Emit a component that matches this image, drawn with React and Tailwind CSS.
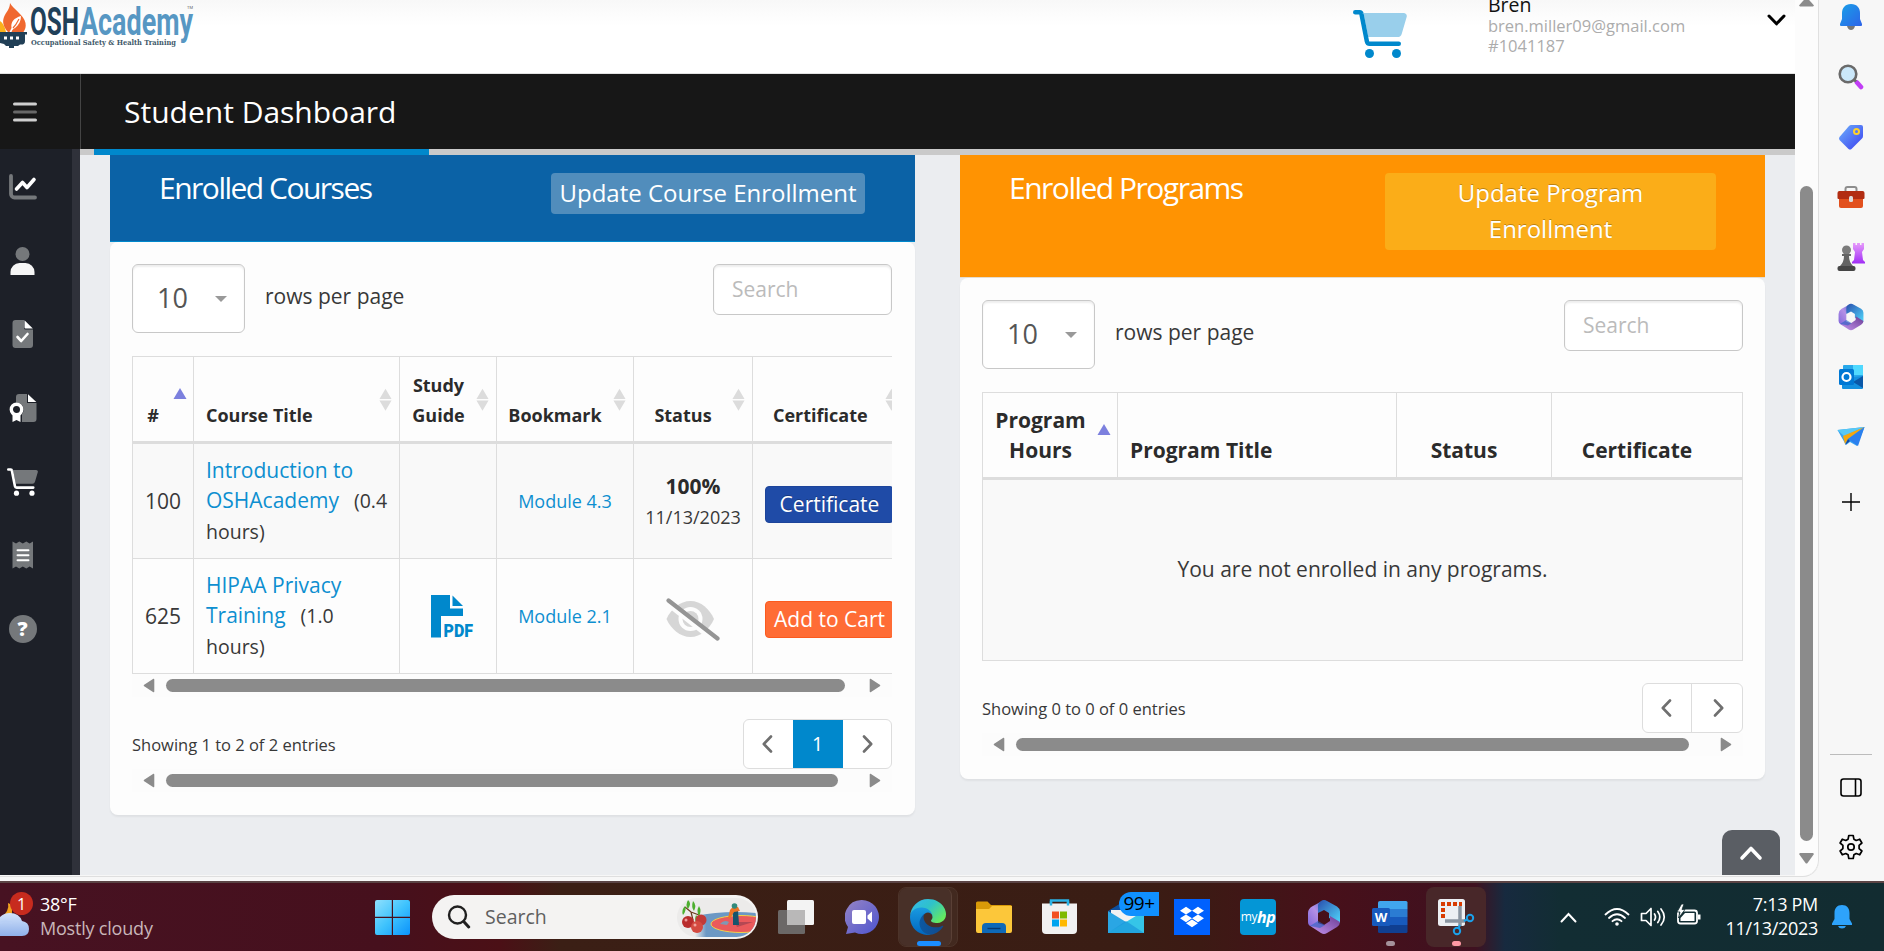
import React from "react";
import { FaDropbox } from "react-icons/fa";

/* ---------- shared bits ---------- */

function Chevron({ dir = "left", className = "" }) {
  const d = {
    left: "M9 1.5 1.8 9 9 16.5",
    right: "M2 1.5 9.2 9 2 16.5",
  }[dir];
  return (
    <svg className={className} width="11" height="18" viewBox="0 0 11 18" fill="none" stroke="#6f6f6f" strokeWidth="2.6" strokeLinecap="round" strokeLinejoin="round">
      <path d={d} />
    </svg>
  );
}

function HScroll({ width, tail }) {
  return (
    <div className="flex h-[23px] items-center bg-[#fcfcfc] pl-[11px]">
      <svg width="12" height="15" viewBox="0 0 12 15">
        <path d="M11.3 1.5v12c0 .7-.7.9-1.3.5L1.2 8.3c-.6-.4-.6-1.1 0-1.5L10 .9c.6-.4 1.300 0 1.300.6z" fill="#8b8b8b" />
      </svg>
      <div className="ml-[11px] h-[13px] rounded-full bg-[#8b8b8b]" style={{ width }} />
      <svg style={{ marginLeft: tail }} width="12" height="15" viewBox="0 0 12 15">
        <path d="M.7 1.500v12c0 .7.7.9 1.300.5l8.800-5.700c.6-.4.6-1.100 0-1.500L2 .9C1.400.5.7.8.7 1.500z" fill="#8b8b8b" />
      </svg>
    </div>
  );
}

function SortBoth() {
  return (
    <svg className="absolute right-[7px] top-[31px]" width="13" height="24" viewBox="0 0 14 24" fill="#dcdcdc">
      <path d="M7 0l6.500 11H.5zM.5 12.500h13L7 23.500z" />
    </svg>
  );
}

function SortUp({ className }) {
  return (
    <svg className={"absolute " + className} width="14" height="12" viewBox="0 0 14 12" fill="#7c80de">
      <path d="M7 0l6.500 11H.5z" />
    </svg>
  );
}

function Toolbar() {
  return (
    <div className="flex h-[69px] items-start">
      <div className="flex h-[69px] w-[113px] items-center rounded-md border border-[#c8c8c8] bg-white pb-px pl-[24px] text-[27px] text-[#555] shadow-[inset_0_2px_2px_rgba(0,0,0,0.07)]">
        10
        <svg className="ml-[27px] mt-0.5" width="12" height="6" viewBox="0 0 12 6">
          <path d="M0 0h12L6 6z" fill="#999" />
        </svg>
      </div>
      <div className="ml-[20px] mt-[16px] text-[21px] leading-[32px] text-[#383838]">rows per page</div>
      <div className="ml-auto flex h-[51px] w-[179px] items-center rounded-md border border-[#c8c8c8] bg-white pl-[18px] pt-px text-[21px] text-[#bbb] shadow-[inset_0_2px_2px_rgba(0,0,0,0.07)]">
        Search
      </div>
    </div>
  );
}

/* ---------- top header ---------- */

function Logo() {
  return (
    <svg className="absolute left-0 top-0 overflow-visible" width="200" height="52" viewBox="0 0 200 52">
      <path d="M0 21c3 2 5 6 6 11H0z" fill="#fbb11b" />
      <path d="M10 3c3 6 14 12 15.500 20 .7 4-.3 6.500-2 9H8C3.500 27 2 22 4 17 6 12 10 9 10 3z" fill="#f0682f" />
      <path d="M21 16c-7 2-10.500 6-9.500 12l-2 4h2c.5-2 1.500-3 3.500-4 4-3 6-7 6-12z" fill="#fff" />
      <path d="M13 28c3-3 4.500-6 6-9" stroke="#f0682f" strokeWidth="1.200" fill="none" />
      <path d="M0 32h27v2.500h-2V41c0 3-2 4-5 3.500L18 46h-4v2H9v-2H6l-2-2-4-1z" fill="#213f56" />
      <path d="M4 36.500h3v3H4zM10 36.500h3v3h-3zM16 36.500h3v3h-3z" fill="#fff" />
      <text x="30" y="35" fontFamily="Roboto, sans-serif" fontWeight="700" fontSize="39" fill="#1f4059" textLength="49" lengthAdjust="spacingAndGlyphs">OSH</text>
      <text x="80" y="35" fontFamily="Roboto, sans-serif" fontWeight="700" fontSize="39" fill="#5797c3" textLength="113" lengthAdjust="spacingAndGlyphs">Academy</text>
      <text x="31" y="45" fontFamily="'DejaVu Serif', serif" fontWeight="700" fontSize="8" fill="#41596a" textLength="145" lengthAdjust="spacingAndGlyphs">Occupational Safety &amp; Health Training</text>
      <text x="187" y="9" fontFamily="Roboto, sans-serif" fontSize="4" fill="#666">TM</text>
    </svg>
  );
}

function CartIcon({ width, height, main, basket }) {
  return (
    <svg width={width} height={height} viewBox="0 0 576 512">
      <path d="M112 32H541c22 0 37 20 32 40L520 252a48 48 0 0 1-46 36H162z" fill={basket} />
      <path d="M24 24h46a20 20 0 0 1 20 17l58 293a32 32 0 0 0 31 26h309" fill="none" stroke={main} strokeWidth="48" strokeLinecap="round" strokeLinejoin="round" />
      <circle cx="176" cy="464" r="48" fill={main} />
      <circle cx="464" cy="464" r="48" fill={main} />
    </svg>
  );
}

function TopHeader() {
  return (
    <header className="relative flex h-[74px] shrink-0 items-start overflow-hidden border-b border-[#e2e2e2] bg-[linear-gradient(#f8f8f8,#ffffff_26px)]">
      <Logo />
      <div className="ml-[1353px] mt-[10px] w-[54px]">
        <CartIcon width={54} height={48} main="#0088cc" basket="#99cfeb" />
      </div>
      <div className="ml-[81px] mt-[-6px] w-[279px] text-[16.5px] leading-[20px] text-[#acacac]">
        <div className="text-[19.5px] leading-[22px] text-[#111]">Bren</div>
        <div>bren.miller09@gmail.com</div>
        <div>#1041187</div>
      </div>
      <svg className="mt-[13px]" width="20" height="14" viewBox="0 0 20 14" fill="none" stroke="#000" strokeWidth="3" strokeLinecap="round" strokeLinejoin="round">
        <path d="M2 3l7.500 7.800L17 3" />
      </svg>
    </header>
  );
}

/* ---------- left sidebar ---------- */

const G = "#75787b";

const sideIcons = [
  <svg width="28" height="26" viewBox="0 0 28 26" fill="none" strokeLinecap="round" strokeLinejoin="round">
    <path d="M2 2v18a3.500 3.500 0 0 0 3.500 3.500H26" stroke={G} strokeWidth="3.800" />
    <path d="M7.500 15l6-6.500 4.500 5 7-8" stroke="#fff" strokeWidth="3.600" />
  </svg>,
  <svg width="26" height="28" viewBox="0 0 26 28">
    <circle cx="12.500" cy="7" r="7" fill={G} />
    <path d="M.5 28v-3a9 9 0 0 1 9-9h6a9 9 0 0 1 9 9v3z" fill="#f5f5f5" />
  </svg>,
  <svg width="22" height="28" viewBox="0 0 22 28">
    <path d="M3.500 0H12v8a1.500 1.500 0 0 0 1.500 1.500H21V25a3 3 0 0 1-3 3H3.500a3 3 0 0 1-3-3V3a3 3 0 0 1 3-3z" fill={G} />
    <path d="M12.500.3V7.500a1 1 0 0 0 1 1h7.300z" fill="#fff" />
    <path d="M5.500 17l3.700 4L15.500 14" stroke="#fff" strokeWidth="2.600" fill="none" strokeLinecap="round" strokeLinejoin="round" />
  </svg>,
  <svg width="28" height="28" viewBox="0 0 28 28">
    <path d="M10 0h8v9h9.500v16a3 3 0 0 1-3 3H13V20c3-3 2.500-11-6-11.500V3a3 3 0 0 1 3-3z" fill={G} />
    <path d="M19 .3V8h8.300z" fill="#fff" />
    <circle cx="7.500" cy="15.500" r="5.200" stroke="#fff" strokeWidth="3.400" fill="#1d2028" />
    <path d="M3.500 20h8v8l-4-2-4 2z" fill="#fff" />
  </svg>,
  <CartIcon width={31} height={28} main="#ffffff" basket={G} />,
  <svg width="22" height="28" viewBox="0 0 22 28">
    <path d="M.5.500l3.500 2 3.300-2 3.500 2 3.500-2 3.300 2 3.400-2v27l-3.400-2-3.300 2-3.500-2-3.500 2-3.300-2-3.500 2z" fill={G} />
    <path d="M5.500 9.300h11M5.500 14.300h11M5.500 19.300h11" stroke="#fff" strokeWidth="1.900" strokeLinecap="round" />
  </svg>,
  <span className="flex h-7 w-7 items-center justify-center rounded-full bg-[#75787b] text-[20px] font-extrabold leading-none text-white">?</span>,
];

function Sidebar() {
  return (
    <nav className="flex w-20 shrink-0 flex-col border-r-8 border-[#2f313a] bg-[#1d2028] pt-px">
      {sideIcons.map((icon, i) => (
        <div key={i} className="flex h-[73.700px] w-[45px] shrink-0 items-center justify-center">
          {icon}
        </div>
      ))}
    </nav>
  );
}

/* ---------- courses card ---------- */

const th = "relative flex items-end justify-center border-l border-[#ddd] pb-[11px] text-center text-[18px] font-bold leading-[30px] text-[#2b2b2b]";
const td = "flex items-center justify-center border-l border-[#ddd]";
const cols = "grid grid-cols-[61px_206px_97px_137px_119px_150px] w-[770px]";

function PdfIcon() {
  return (
    <svg className="ml-[8px]" width="43" height="43" viewBox="0 0 43 43">
      <path d="M0 0h19v13.500h13V21H10v21.500H0z" fill="#0088cc" />
      <path d="M21.500.5V11H32z" fill="#0088cc" />
      <text x="12.500" y="42" fontFamily="Roboto, sans-serif" fontWeight="900" fontSize="18.500" fill="#0088cc" textLength="29.500" lengthAdjust="spacingAndGlyphs">PDF</text>
    </svg>
  );
}

function EyeSlash() {
  return (
    <svg className="mt-[6px]" width="54" height="44" viewBox="0 0 54 44" fill="none">
      <path d="M.5 22C5 12 14 4 24.500 4S43.500 12 48 22C43.500 32 35 40 24.500 40S5 32 .500 22z" fill="#d6d6d6" />
      <circle cx="24.500" cy="22" r="12" fill="#fdfdfd" />
      <circle cx="24.500" cy="22" r="8" fill="#d6d6d6" />
      <path d="M20 14l4 5-6 2z" fill="#fdfdfd" />
      <path d="M-1 5L47 43" stroke="#fdfdfd" strokeWidth="4.500" />
      <path d="M2.500 3.500l49 38" stroke="#959595" strokeWidth="4.200" strokeLinecap="round" />
    </svg>
  );
}

function CoursesCard() {
  return (
    <section className="flex w-[805px] flex-col">
      <div className="flex h-[87px] items-start justify-between border-b border-[#0088cc] bg-[#0b62a6] pl-[49px] pr-[50px] pt-[18px] text-white">
        <h2 className="-mt-[3px] text-[30px] leading-[36px] tracking-[-1.500px]">Enrolled Courses</h2>
        <button className="h-[41px] w-[314px] rounded bg-[#518dbc] pb-0.5 text-center text-[24px] leading-[38px]">Update Course Enrollment</button>
      </div>
      <div className="bg-[#ebedf0]">
        <div className="rounded-lg bg-[#fdfdfd] px-[22px] pb-[23px] pr-[23px] pt-[22px] shadow-[0_2px_2px_rgba(0,0,0,0.05)]">
          <Toolbar />
          <div className="mt-[23px] overflow-hidden">
            <div className={cols + " h-[88px] border-b-[3px] border-t border-b-[#ddd] border-t-[#ddd]"}>
              <div className={th + " pr-[20px]"}>#<SortUp className="right-[6px] top-[31px]" /></div>
              <div className={th + " !justify-start pl-3"}>Course Title<SortBoth /></div>
              <div className={th + " pr-[19px]"}>Study<br />Guide<SortBoth /></div>
              <div className={th + " pr-[20px]"}>Bookmark<SortBoth /></div>
              <div className={th + " pr-[20px]"}>Status<SortBoth /></div>
              <div className={th + " !justify-start pl-[20px]"}>Certificate
                <svg className="absolute left-[132px] top-[31px]" width="13" height="24" viewBox="0 0 14 24" fill="#dcdcdc"><path d="M7 0l6.500 11H.5zM.5 12.500h13L7 23.500z" /></svg>
              </div>
            </div>
            <div className={cols + " h-[115px] border-b border-[#ddd] bg-[#f9f9f9] text-[21px] leading-[30px] text-[#383838]"}>
              <div className={td}>100</div>
              <div className={td + " !justify-start pl-[12px]"}>
                <div>
                  <span className="text-[#0d8fd0]">Introduction to<br />OSHAcademy</span>
                  <span className="ml-[15px] text-[19.500px]">(0.4<br />hours)</span>
                </div>
              </div>
              <div className={td} />
              <div className={td + " text-[18px] text-[#0d8fd0]"}>Module 4.3</div>
              <div className={td + " flex-col gap-px"}>
                <b className="text-[#2b2b2b]">100%</b>
                <span className="text-[18px]">11/13/2023</span>
              </div>
              <div className={td + " !justify-start pl-3"}>
                <button className="mt-[7px] h-[37px] w-[129px] rounded border border-[#1d449a] bg-[#1f4ba7] pb-px text-center leading-[34px] text-white [text-shadow:0_-1px_0_rgba(0,0,0,0.25)]">Certificate</button>
              </div>
            </div>
            <div className={cols + " h-[115px] border-b border-[#ddd] text-[21px] leading-[30px] text-[#383838]"}>
              <div className={td}>625</div>
              <div className={td + " !justify-start pl-[12px]"}>
                <div>
                  <span className="text-[#0d8fd0]">HIPAA Privacy<br />Training</span>
                  <span className="ml-[15px] text-[19.500px]">(1.0<br />hours)</span>
                </div>
              </div>
              <div className={td}><PdfIcon /></div>
              <div className={td + " text-[18px] text-[#0d8fd0]"}>Module 2.1</div>
              <div className={td}><EyeSlash /></div>
              <div className={td + " !justify-start pl-3"}>
                <button className="mt-[7px] h-[37px] w-[129px] rounded border border-[#fb5a1e] bg-[#ff6c35] pb-px text-center leading-[34px] text-white">Add to Cart</button>
              </div>
            </div>
            <HScroll width={679} tail={24} />
          </div>
          <div className="mt-[22px] flex h-[50px] items-center justify-between">
            <div className="pt-[3px] text-[16.500px] text-[#383838]">Showing 1 to 2 of 2 entries</div>
            <div className="flex h-[50px] w-[149px] overflow-hidden rounded-md border border-[#ddd] bg-white">
              <div className="flex flex-1 items-center justify-center pr-0.5"><Chevron /></div>
              <div className="-my-px flex w-[50px] items-center justify-center bg-[#0088cc] text-[19.500px] text-white">1</div>
              <div className="flex flex-1 items-center justify-center pl-0.5"><Chevron dir="right" /></div>
            </div>
          </div>
          <HScroll width={672} tail={31} />
        </div>
      </div>
    </section>
  );
}

/* ---------- programs card ---------- */

function ProgramsCard() {
  const cell = "relative flex items-end border-l border-[#ddd] pb-[12px] text-[21px] font-bold leading-[30px] text-[#2b2b2b]";
  return (
    <section className="ml-[45px] flex w-[805px] flex-col">
      <div className="flex h-[123px] items-start justify-between border-b border-[#e4dccf] bg-[#ff9302] pl-[49px] pr-[49px] pt-[18px] text-white">
        <h2 className="-mt-[3px] text-[30px] leading-[36px] tracking-[-1.500px]">Enrolled Programs</h2>
        <button className="h-[77px] w-[331px] rounded bg-[#fbad18] pb-px text-center text-[24px] leading-[36px] [text-shadow:0_-1px_0_rgba(0,0,0,0.25)]">Update Program<br />Enrollment</button>
      </div>
      <div className="rounded-lg bg-[#fdfdfd] px-[22px] pb-[23px] pt-[22px] shadow-[0_2px_2px_rgba(0,0,0,0.05)]">
        <Toolbar />
        <div className="mt-[23px] border-r border-[#ddd]">
          <div className="grid h-[88px] grid-cols-[135px_279px_155px_1fr] border-b-[3px] border-t border-[#ddd]">
            <div className={cell + " justify-center pr-[19px] text-center"}>Program<br />Hours<SortUp className="right-[6px] top-[31px]" /></div>
            <div className={cell + " pl-[12px]"}>Program Title</div>
            <div className={cell + " justify-center pr-[20px]"}>Status</div>
            <div className={cell + " justify-center pr-[20px]"}>Certificate</div>
          </div>
          <div className="flex h-[181px] items-center justify-center border-b border-l border-[#ddd] bg-[#f9f9f9] text-[21px] text-[#383838]">You are not enrolled in any programs.</div>
        </div>
        <div className="mt-[22px] flex h-[50px] items-center justify-between">
          <div className="pt-[3px] text-[16.500px] text-[#383838]">Showing 0 to 0 of 0 entries</div>
          <div className="flex h-[50px] w-[101px] overflow-hidden rounded-md border border-[#ddd] bg-white">
            <div className="flex w-[49px] items-center justify-center border-r border-[#ddd] pr-0.5"><Chevron /></div>
            <div className="flex flex-1 items-center justify-center pl-0.5"><Chevron dir="right" /></div>
          </div>
        </div>
        <HScroll width={673} tail={31} />
      </div>
    </section>
  );
}

/* ---------- right browser rail ---------- */

function M365({ size, id }) {
  return (
    <svg width={size} height={size} viewBox="0 0 36 36">
      <defs>
        <linearGradient id={id + "a"} x1="0" y1="1" x2="1" y2="0"><stop offset="0" stopColor="#7a62d8" /><stop offset=".5" stopColor="#b590e6" /><stop offset="1" stopColor="#2f5fc4" /></linearGradient>
        <linearGradient id={id + "b"} x1="0" y1="0" x2="1" y2="1"><stop offset="0" stopColor="#2a4fae" /><stop offset="1" stopColor="#50d6fb" /></linearGradient>
        <linearGradient id={id + "c"} x1="0" y1="1" x2="1" y2="0"><stop offset="0" stopColor="#c695ee" /><stop offset="1" stopColor="#6a3c94" /></linearGradient>
      </defs>
      <path d="M18 1 6 7.500Q2 10 2 14v9q0 3 3 4.500l6 2.500q1-1 1-4V13l11-9z" fill={"url(#" + id + "a)"} />
      <path d="M15 2q3-2 6 0l10 5.500q3 2 3 5V24l-11-5v-5l-5-3-6 3V6q0-2 3-4z" fill={"url(#" + id + "b)"} />
      <path d="M24 17l10 6q0 3-3 5l-10 6q-3 2-6 0L5 27.500 12 24l6 2 6-4z" fill={"url(#" + id + "c)"} />
      <path d="M12 22L4 27l10 2 5-3z" fill="#2a62c8" opacity=".6" />
    </svg>
  );
}

const railIcons = [
  <svg width="24" height="28" viewBox="0 0 24 28">
    <defs><linearGradient id="bell" x1="0" y1="0" x2="1" y2="1"><stop offset="0" stopColor="#18a0e8" /><stop offset="1" stopColor="#2e63e8" /></linearGradient></defs>
    <path d="M8 23h8q-1 4-4 4t-4-4z" fill="#777" />
    <path d="M12 1C6 1 3 5 3 10v6l-2 5q-.5 2 1 2h20q1.500 0 1-2l-2-5v-6c0-5-3-9-9-9z" fill="url(#bell)" />
  </svg>,
  <svg width="26" height="26" viewBox="0 0 26 26">
    <path d="M19 18.500l4 4.500" stroke="#c13df5" strokeWidth="4.600" strokeLinecap="round" />
    <path d="M16 15.500l2 2" stroke="#6a6a6a" strokeWidth="3" />
    <circle cx="10" cy="10" r="8.300" fill="#cbe8fa" stroke="#6a6a6a" strokeWidth="2.600" />
  </svg>,
  <svg width="26" height="26" viewBox="0 0 26 26">
    <defs><linearGradient id="tag" x1="0" y1="0" x2="1" y2="1"><stop offset="0" stopColor="#6db0fb" /><stop offset="1" stopColor="#3b3ff0" /></linearGradient></defs>
    <path d="M13 1h10q2 0 2 2v9q0 1.500-1 2.500L13.500 25q-1.500 1-3 0L1.500 16q-1-1.500 0-3L11 2q1-1 2-1z" fill="url(#tag)" />
    <circle cx="18.500" cy="7.500" r="2.500" fill="none" stroke="#ffd12b" strokeWidth="2" />
  </svg>,
  <svg width="28" height="24" viewBox="0 0 28 24">
    <path d="M8.500 7V4q0-2 2-2h7q2 0 2 2v3" fill="none" stroke="#8d8d8d" strokeWidth="2" />
    <rect x="2" y="6" width="24" height="17" rx="2" fill="#e2501d" />
    <path d="M.500 8q0-2 2-2h23q2 0 2 2v5q0 1-1 1h-25q-1 0-1-1z" fill="#b22d12" />
    <rect x="12" y="11" width="4" height="6" rx="1.500" fill="#ddd" />
  </svg>,
  <svg width="30" height="30" viewBox="0 0 30 30">
    <defs><linearGradient id="rook" x1="0" y1="0" x2="0" y2="1"><stop offset="0" stopColor="#e79bfb" /><stop offset="1" stopColor="#a02df5" /></linearGradient></defs>
    <path d="M17 1h2.500v2H21V1h3v2h1.500V1H28v6l-2 3 1 8 2 2v1.500H16V20l2-2 1-8-2-3z" fill="url(#rook)" />
    <circle cx="10.500" cy="8" r="4.500" fill="#7b7b7b" />
    <path d="M6 12h9v2h-2q0 6 4 10H4q4-4 4-10H6z" fill="#636363" />
    <rect x="1.500" y="24" width="18" height="5" rx="2" fill="#454545" />
  </svg>,
  <M365 size={28} id="rail" />,
  <svg width="26" height="26" viewBox="0 0 26 26">
    <path d="M6 1h18q1 0 1 1v12H5V2q0-1 1-1z" fill="#28a8ea" />
    <path d="M15 1h9q1 0 1 1v9H15z" fill="#50d9ff" />
    <path d="M4 13h11l10-1v12q0 1-1 1H5q-1 0-1-1z" fill="#1490df" />
    <path d="M15 18l10-6v12z" fill="#0a58a8" />
    <rect x="1" y="5" width="15" height="16" rx="1.500" fill="#0078d4" />
    <circle cx="8.500" cy="13" r="4" fill="none" stroke="#fff" strokeWidth="2.200" />
  </svg>,
  <svg width="28" height="22" viewBox="0 0 28 22">
    <path d="M.5 4L27.500 1 20 20l-7-4-4 3z" fill="#36a3f2" />
    <path d="M.5 4L27.500 1 7 10z" fill="#58c8f4" />
    <path d="M27.500 1L6 10l2 8 3-5z" fill="#f5a70d" />
    <path d="M27.500 1L11 13l10 7z" fill="#2b80ee" />
    <path d="M11 13l-3 6 5-4z" fill="#17479e" />
  </svg>,
];

function Rail() {
  return (
    <aside className="flex h-full w-[65px] shrink-0 flex-col items-center bg-[#f7f7f7] pr-0.5">
      <div className="-mt-[13px] flex flex-col">
        {railIcons.map((icon, i) => (
          <div key={i} className="flex h-[60px] w-[63px] items-center justify-center">{icon}</div>
        ))}
        <div className="flex h-[70px] items-center justify-center">
          <svg width="20" height="20" viewBox="0 0 20 20" stroke="#000" strokeWidth="1.400"><path d="M10 1v18M1 10h18" /></svg>
        </div>
      </div>
      <div className="mt-[217px] h-px w-[42px] bg-[#bcbcbc]" />
      <svg className="mt-[23px] shrink-0" width="22" height="19" viewBox="0 0 22 19" fill="none" stroke="#000" strokeWidth="1.600">
        <rect x="1" y="1" width="20" height="17" rx="2.500" /><path d="M15.500 1v17" />
      </svg>
      <svg className="mt-[37px] shrink-0" width="26" height="27" viewBox="0 0 26 27" fill="none" stroke="#000" strokeWidth="1.700" strokeLinejoin="round">
        <path d="M10.800 1.500h4.400l.7 3.700 2.300 1.300 3.500-1.300 2.200 3.800-2.800 2.400v3.200l2.800 2.400-2.200 3.800-3.500-1.300-2.300 1.300-.7 3.700h-4.400l-.7-3.700-2.300-1.300-3.500 1.300L2.100 17l2.800-2.400v-3.200L2.100 9l2.200-3.800 3.500 1.300 2.300-1.300z" />
        <circle cx="13" cy="13" r="3.200" />
      </svg>
    </aside>
  );
}

function PageScrollbar() {
  return (
    <div className="flex w-6 shrink-0 flex-col items-center rounded-br-2xl border-r border-[#e0e0e0] bg-[#fcfcfc]">
      <svg width="15" height="10" viewBox="0 0 15 10" className="-mt-[3px] shrink-0"><path d="M7.500 0L15 8.500 14 9.500H1L0 8.500z" fill="#8b8b8b" /></svg>
      <div className="mt-[179px] h-[655px] w-[13px] shrink-0 rounded-full bg-[#8b8b8b]" />
      <svg width="15" height="11" viewBox="0 0 15 11" className="mt-[12px] shrink-0"><path d="M1 0h13l1 1-6.500 9q-1 1-2 0L0 1z" fill="#8b8b8b" /></svg>
    </div>
  );
}

/* ---------- taskbar ---------- */

const ui = "font-['Open_Sans','Noto_Sans',sans-serif]";

function Cell({ children }) {
  return <div className="flex h-[60px] w-[66px] shrink-0 items-center justify-center">{children}</div>;
}

function SearchArt() {
  return (
    <svg className="absolute right-[1px] top-[3px]" width="80" height="39" viewBox="0 0 80 39">
      <defs>
        <clipPath id="pill"><rect x="0" y="0" width="79" height="39" rx="19.500" /></clipPath>
        <linearGradient id="water" x1="0" y1="0" x2="1" y2="0"><stop offset="0" stopColor="#6c98c4" stopOpacity="0" /><stop offset=".18" stopColor="#6c98c4" /></linearGradient>
      </defs>
      <g clipPath="url(#pill)">
        <rect width="80" height="39" fill="#ecebea" />
        <path d="M18 18q30-6 62-3v24H18z" fill="url(#water)" />
        <ellipse cx="64" cy="26" rx="30" ry="8.500" fill="#ea5a5c" stroke="#f2cf4a" strokeWidth="1" />
        <path d="M58 24h18l-16 5z" fill="#8f3c4c" opacity=".6" />
        <path d="M43 26q4-5 9-2l-2 3z" fill="#8198b4" />
        <path d="M8 9l6 5 8 3M14 14l2 8" stroke="#6d3c1f" strokeWidth="1.200" fill="none" />
        <path d="M11 2q4 3 0 9-3-4 0-9zM16 3q4 4 1 10-3-4-1-10zM22 8q3 5 0 10-3-5 0-10zM8 8q2 4-2 9-2-5 2-9zM19 17q4 4 1 10-3-5-1-10z" fill="#4caf2e" />
        <circle cx="11" cy="24" r="6" fill="#b92c2c" /><circle cx="24" cy="22" r="5.500" fill="#c23a37" /><circle cx="20" cy="29" r="6" fill="#d44a40" />
        <circle cx="9" cy="22" r="1.500" fill="#e99" /><circle cx="18" cy="27" r="1.500" fill="#f0a39b" />
        <path d="M56 12h5l1 15h-6z" fill="#17546c" />
        <path d="M53 12q3-4 8-3l2 4-6 1-4 7-2-1z" fill="#ee7426" />
        <circle cx="57.500" cy="8" r="2.800" fill="#318a7b" />
      </g>
    </svg>
  );
}

function Taskbar() {
  return (
    <footer className={ui + " flex h-[70px] shrink-0 items-center overflow-hidden border-t-2 border-[#5b4445] bg-[linear-gradient(90deg,#471222_0px,#46101d_380px,#4b1016_500px,#3b1f15_560px,#3a1d14_1130px,#3c1a14_1200px,#47101a_1330px,#3f1120_1475px,#172a3f_1505px,#122d33_1560px,#122c31_1884px)] text-white"}>
      <div className="relative h-[60px] w-[40px] shrink-0">
        <svg className="absolute left-0 top-[14px]" width="32" height="38" viewBox="0 0 32 38">
          <defs><linearGradient id="cloud" x1="0" y1="0" x2="0" y2="1"><stop offset="0" stopColor="#d4e4fb" /><stop offset="1" stopColor="#8fb0ea" /></linearGradient></defs>
          <path d="M8 2q2 8-8 16v12h12V4z" fill="#f2a31f" />
          <path d="M0 16q4-4 10-4 9 0 12 8 7 1 7 8 0 7-7 7H0z" fill="url(#cloud)" />
          <path d="M0 22q6-3 12 0" stroke="#b8cff5" fill="none" strokeWidth="2" />
        </svg>
        <div className="absolute left-[10px] top-[5px] flex h-[23px] w-[23px] items-center justify-center rounded-full bg-[#c72b1e] text-[16px] leading-none">1</div>
      </div>
      <div className="w-[335px] pb-0.5 text-[18px] leading-[24px] tracking-[-0.3px]">
        <div>38°F</div>
        <div className="text-[#c9b6ba] tracking-[-0.2px]">Mostly cloudy</div>
      </div>
      <svg className="shrink-0" width="35" height="35" viewBox="0 0 35 35">
        <defs><linearGradient id="win" x1="0" y1="0" x2="1" y2="1"><stop offset="0" stopColor="#8fe0fd" /><stop offset=".5" stopColor="#3fc3fd" /><stop offset="1" stopColor="#0a92fb" /></linearGradient></defs>
        <path d="M2 0h14.800v16.800H0V2q0-2 2-2zM18 0h15q2 0 2 2v14.800H18zM0 18h16.800v17H2q-2 0-2-2zM18 18h17v15q0 2-2 2H18z" fill="url(#win)" />
      </svg>
      <div className="relative ml-[22px] mr-[5px] flex h-[44px] w-[326px] shrink-0 items-center rounded-full bg-[#f4f3f2] pl-[15px]">
        <svg width="24" height="24" viewBox="0 0 24 24" fill="none" stroke="#202020" strokeWidth="2.400" strokeLinecap="round"><circle cx="10.500" cy="10" r="8.500" /><path d="M16.700 16.500l5 5.500" strokeWidth="3" /></svg>
        <span className="ml-[14px] text-[19.500px] text-[#5f5f5f]">Search</span>
        <SearchArt />
      </div>
      <Cell>
        <svg width="36" height="34" viewBox="0 0 36 34">
          <rect x="9" y="0" width="27" height="25" rx="1.500" fill="#f3f3f3" />
          <rect x="0" y="10" width="27" height="24" rx="1.500" fill="#6b6867" />
          <path d="M9 10h18v15H9z" fill="#b9b8b8" />
        </svg>
      </Cell>
      <Cell>
        <svg width="34" height="35" viewBox="0 0 34 35">
          <defs><linearGradient id="chat" x1="0" y1="0" x2="1" y2="1"><stop offset="0" stopColor="#9684c4" /><stop offset="1" stopColor="#4d55d0" /></linearGradient></defs>
          <path d="M17 0a17 17 0 1 1-7 32.500L1 34l2-7A17 17 0 0 1 17 0z" fill="url(#chat)" />
          <rect x="7" y="10" width="14" height="14" rx="2" fill="#fff" /><path d="M22.500 15.500L27 11.500v11l-4.500-4z" fill="#fff" />
        </svg>
      </Cell>
      <Cell>
        <div className="relative flex h-[60px] w-[60px] items-center justify-center rounded-lg border border-[#4c3329] bg-[#42291f]">
          <div className="absolute left-0 top-0 h-[58px] w-[53px] rounded-lg border-r border-[#5a4036] bg-[#483028]" />
          <svg className="relative" width="36" height="36" viewBox="0 0 256 256">
            <defs>
              <linearGradient id="e1" x1="0" y1="0" x2="1" y2="0"><stop offset="0" stopColor="#0c59a4" /><stop offset="1" stopColor="#114a8b" /></linearGradient>
              <linearGradient id="e2" x1="0" y1="0" x2="0" y2="1"><stop offset="0" stopColor="#1b9de2" /><stop offset="1" stopColor="#0067c0" /></linearGradient>
              <linearGradient id="e3" x1="0" y1="0" x2="1" y2=".7"><stop offset="0" stopColor="#35b8f1" /><stop offset=".5" stopColor="#2fc2c9" /><stop offset="1" stopColor="#66eb5e" /></linearGradient>
            </defs>
            <path d="M231 190.500c-3.400 1.800-6.900 3.400-10.500 4.700a101.500 101.500 0 0 1-35.900 6.500c-47.300 0-88.500-32.500-88.500-74.300 0-11.500 6.300-22 16.200-27.600-42.800 1.800-53.800 46.400-53.800 72.500 0 73.900 68.100 81.400 82.800 81.400 7.900 0 19.800-2.300 27-4.600l1.300-.4a127.700 127.700 0 0 0 66.600-52.800 4 4 0 0 0-5.200-5.400z" fill="url(#e1)" />
            <path d="M105.700 241.400a79.200 79.200 0 0 1-22.700-21.300 80.700 80.700 0 0 1 29.500-120c3.200-1.500 8.500-4.100 15.600-4a32.400 32.400 0 0 1 25.700 13 31.900 31.900 0 0 1 6.300 18.700c0-.2 24.500-79.600-80-79.600-43.900 0-80 41.600-80 78.200-.2 19.300 4 38.500 12.100 56a127.600 127.600 0 0 0 155.600 67.100 75.300 75.300 0 0 1-62.100-8z" fill="url(#e2)" />
            <path d="M152.330 148.860c-.81 1.050-3.300 2.500-3.300 5.660 0 2.610 1.700 5.120 4.720 7.230 14.380 10 41.490 8.680 41.560 8.680a59.560 59.560 0 0 0 30.270-8.350 61.380 61.380 0 0 0 30.430-52.880c.26-22.410-8-37.310-11.340-43.910C223.460 23.840 177.720 0 128 0A128 128 0 0 0 0 126.200c.48-36.540 36.800-66.050 80-66.050 3.500 0 23.460.34 42 10.070 16.340 8.580 24.900 18.940 30.850 29.210 6.180 10.670 7.280 24.150 7.280 29.520s-2.740 13.330-7.800 19.910z" fill="url(#e3)" />
          </svg>
          <div className="absolute bottom-0 left-[18px] h-[5px] w-6 rounded-full bg-[#1b8dff]" />
        </div>
      </Cell>
      <Cell>
        <svg width="36" height="33" viewBox="0 0 36 33">
          <path d="M0 2q0-1.500 1.500-1.500h10L15 4h19.500Q36 4 36 5.500V12H0z" fill="#d99a08" />
          <path d="M0 8h13l3-3h20v25q0 2-2 2H2q-2 0-2-2z" fill="#fcc73a" />
          <path d="M6 32v-6q0-4 4-4h16q4 0 4 4v6z" fill="#0e69b8" /><path d="M11.500 27.500h13" stroke="#083a70" strokeWidth="1.400" />
        </svg>
      </Cell>
      <Cell>
        <svg className="mr-0.5" width="35" height="36" viewBox="0 0 35 36">
          <path d="M9 7V1.500h17V7" fill="none" stroke="#2bb3e6" strokeWidth="2.400" />
          <path d="M0 4.500h35V31q0 4-4 4H4q-4 0-4-4z" fill="#f1f1f1" />
          <path d="M9 6.500V2M26 6.500V2" stroke="#2bb3e6" strokeWidth="2.400" />
          <path d="M10 12.500h7v7h-7z" fill="#f25022" /><path d="M18 12.500h7v7h-7z" fill="#7fba00" /><path d="M10 20.500h7v7h-7z" fill="#00a4ef" /><path d="M18 20.500h7v7h-7z" fill="#ffb900" />
        </svg>
      </Cell>
      <Cell>
        <div className="relative h-[36px] w-[36px]">
          <svg width="36" height="36" viewBox="0 0 36 36">
            <path d="M0 12L18 1l18 11-18 14z" fill="#0e4f9e" />
            <path d="M3 11h30v6L18 26 3 17z" fill="#f2f2f2" />
            <path d="M0 12l36 22H0z" fill="#2aa6e4" /><path d="M36 12v22H0z" fill="#35c5e8" /><path d="M0 34l18-12 18 12z" fill="#1590d8" opacity=".6" />
          </svg>
          <div className="absolute left-[11px] top-[-7px] flex h-6 w-10 items-center justify-center rounded-l-full rounded-r-lg bg-[#1090ff] pb-0.5 text-[19px] leading-none tracking-[-0.500px] text-black">99+</div>
        </div>
      </Cell>
      <Cell>
        <div className="flex h-9 w-9 items-center justify-center bg-[#0061fe]"><FaDropbox size={24} color="#fff" /></div>
      </Cell>
      <Cell>
        <div className="flex h-9 w-9 items-center justify-center rounded-sm bg-[#0496d6] text-[12px] leading-none tracking-[-0.500px]">
          my<i className="text-[16px] font-bold tracking-[-0.500px]">hp</i>
        </div>
      </Cell>
      <Cell><M365 size={36} id="task" /></Cell>
      <Cell>
        <div className="relative flex h-[60px] w-9 items-center justify-center">
          <svg width="36" height="34" viewBox="0 0 36 34">
            <path d="M8 1h26q1.500 0 1.500 1.500V9H6V2.500Q6 1 8 1z" fill="#41a5ee" /><path d="M6 9h29.500v8H6z" fill="#2b7cd3" /><path d="M6 17h29.500v8H6z" fill="#185abd" /><path d="M6 25h29.500v6.500q0 1.500-1.500 1.500H7.500Q6 33 6 31.500z" fill="#103f91" />
            <rect x="0" y="8" width="18" height="18" rx="1.500" fill="#185abd" />
            <text x="9" y="22" textAnchor="middle" fontFamily="'Open Sans', sans-serif" fontWeight="700" fontSize="13" fill="#fff">W</text>
          </svg>
          <div className="absolute bottom-[1px] h-[5px] w-[9px] rounded-full bg-[#a5929b]" />
        </div>
      </Cell>
      <Cell>
        <div className="relative flex h-[60px] w-[60px] items-center justify-center rounded-lg bg-[#482729]">
          <svg width="37" height="37" viewBox="0 0 37 37">
            <rect x="0" y="0" width="27" height="27" rx="2.500" fill="#eceff3" />
            <path d="M3 5h21M5 3v17" stroke="#d83b01" strokeWidth="4" strokeDasharray="4 2" fill="none" />
            <path d="M22 7v20M7 22h20" stroke="#8a95a1" strokeWidth="3.500" />
            <circle cx="32" cy="19" r="3.200" fill="none" stroke="#1ba1ea" strokeWidth="2" /><circle cx="19" cy="32" r="3.200" fill="none" stroke="#1ba1ea" strokeWidth="2" />
            <path d="M22 26l-2 4M26 22l4-2" stroke="#1ba1ea" strokeWidth="2.200" />
          </svg>
          <div className="absolute bottom-[1px] h-[5px] w-[9px] rounded-full bg-[#ff99a4]" />
        </div>
      </Cell>
      <svg className="ml-[71px] shrink-0" width="17" height="11" viewBox="0 0 17 11" fill="none" stroke="#fff" strokeWidth="2" strokeLinecap="round"><path d="M1.500 9.500l7-7.500 7 7.500" /></svg>
      <svg className="ml-[27px] shrink-0" width="26" height="20" viewBox="0 0 26 20" fill="none" stroke="#fff" strokeWidth="1.800" strokeLinecap="round">
        <path d="M1.500 7.500q11.500-11 23 0M5 11q8-7.500 16 0M8.500 14.200q4.500-4 9 0" /><circle cx="13" cy="17" r="1.800" fill="#fff" stroke="none" />
      </svg>
      <svg className="ml-[10px] shrink-0" width="26" height="20" viewBox="0 0 26 20" fill="none" stroke="#fff" strokeWidth="1.700" strokeLinecap="round" strokeLinejoin="round">
        <path d="M1.500 6.500H6l5-5v17l-5-5H1.500zM14.500 7q2 3 0 6M17.800 4.500q4 5.500 0 11M21 2q6.500 8 0 16" />
      </svg>
      <svg className="mb-1 ml-[10px] shrink-0" width="26" height="22" viewBox="0 0 26 22" fill="none">
        <rect x="2" y="6.500" width="19" height="13" rx="2.500" stroke="#fff" strokeWidth="1.800" /><path d="M9 9h9.500v8H4.500v-3z" fill="#fff" /><path d="M22 10.500h2.500v5H22" fill="#fff" />
        <path d="M5.500 0L1 8h3l-1.500 6L9 5.500H6L8 0z" fill="#fff" stroke="#122c31" strokeWidth=".8" />
      </svg>
      <div className="ml-auto mr-[14px] pb-0.5 text-right text-[18px] leading-[24px] tracking-[-0.300px]">
        <div>7:13 PM</div>
        <div>11/13/2023</div>
      </div>
      <svg className="mr-[32px] shrink-0" width="20" height="24" viewBox="0 0 20 24" fill="#2ea3fb"><path d="M10 0C5 0 2.500 3.500 2.500 8v6L0 18.500V20h20v-1.500L17.500 14V8C17.500 3.500 15 0 10 0zM6 21h8q-1 2.500-4 2.500T6 21z" /></svg>
    </footer>
  );
}

/* ---------- page ---------- */

export default function App() {
  return (
    <div className="flex h-[951px] w-[1884px] flex-col overflow-hidden bg-[#f7f7f7] font-['Open_Sans','Noto_Sans',sans-serif]">
      <div className="flex h-[881px] shrink-0">
        <div className="flex h-[877px] w-[1819px] shrink-0 overflow-hidden rounded-br-2xl border-b border-[#dfdfdf]">
          <main className="flex w-[1795px] shrink-0 flex-col">
            <TopHeader />
            <div className="flex h-[75px] shrink-0 items-center bg-[#171717] text-white">
              <div className="flex h-[75px] w-[81px] items-center border-r border-[#444] pl-[13px]">
                <svg width="24" height="20" viewBox="0 0 24 20" strokeWidth="3" strokeLinecap="round"><path d="M1.500 2h21M1.500 18h21" stroke="#cfcfcf" /><path d="M1.500 10h21" stroke="#686868" /></svg>
              </div>
              <h1 className="pl-[43px] text-[30px]">Student Dashboard</h1>
            </div>
            <div className="flex h-[726px] shrink-0">
              <Sidebar />
              <div className="relative flex-1 bg-[#ebedf0]">
                <div className="flex h-[6px] bg-[#cacaca]"><div className="ml-[14px] w-[335px] bg-[#0088cc]" /></div>
                <div className="flex items-start pl-[30px]">
                  <CoursesCard />
                  <ProgramsCard />
                </div>
                <button className="absolute bottom-0 right-[15px] flex h-[45px] w-[58px] items-center justify-center rounded-t-[10px] bg-[#5a5e64]">
                  <svg width="24" height="16" viewBox="0 0 24 16" fill="none" stroke="#fff" strokeWidth="3.600" strokeLinecap="round" strokeLinejoin="round"><path d="M3 13l9-9.500L21 13" /></svg>
                </button>
              </div>
            </div>
          </main>
          <PageScrollbar />
        </div>
        <Rail />
      </div>
      <Taskbar />
    </div>
  );
}
